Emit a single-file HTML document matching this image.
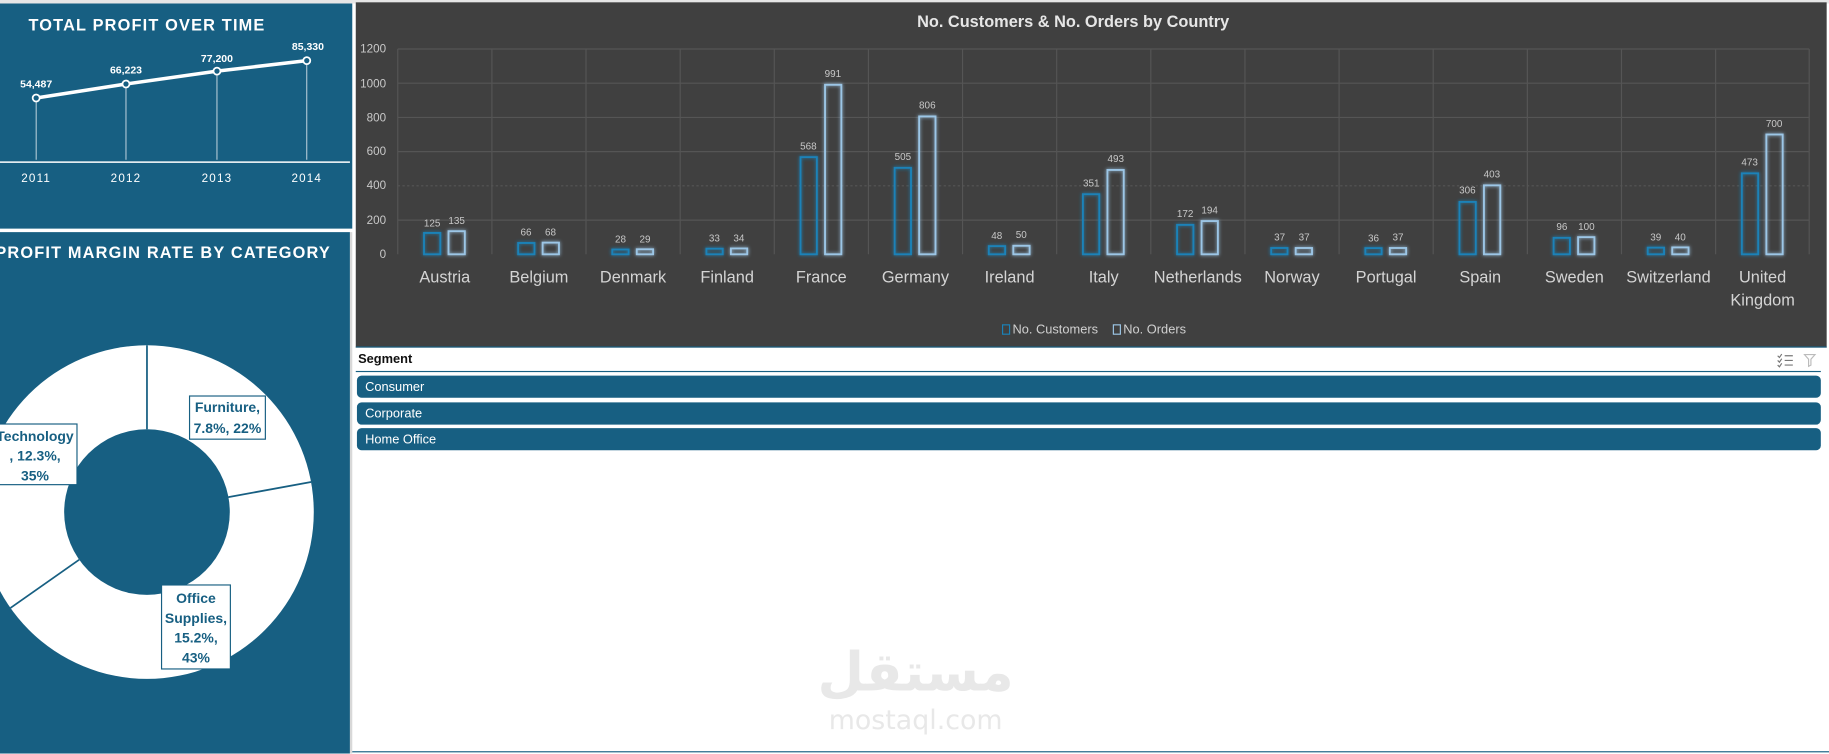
<!DOCTYPE html>
<html><head><meta charset="utf-8"><style>
html,body{margin:0;padding:0;width:1829px;height:754px;overflow:hidden;background:#fff}
#w{position:absolute;left:0;top:0;width:1568px;height:646px;transform:scale(1.16645);transform-origin:0 0;font-family:"Liberation Sans",sans-serif}
.p{position:absolute;background:#175f82;overflow:hidden}
.item{position:absolute;left:306px;width:1255px;height:19px;background:#175f82;border-radius:4px;color:#fff;font-size:11px;line-height:20px;padding-left:7px;box-sizing:border-box}
</style></head><body><div id="w">
<div style="position:absolute;left:0;top:0;width:1568px;height:3px;background:#e6e6e6"></div>
<div class="p" style="left:0;top:3px;width:302px;height:193px">
<svg width="302" height="193" style="position:absolute;left:0;top:0">
<text x="126" y="23" fill="#fff" font-size="14" font-weight="bold" text-anchor="middle" letter-spacing="1">TOTAL PROFIT OVER TIME</text>
<g stroke="#cfdde6" stroke-width="0.8"><line x1="31" y1="81" x2="31" y2="134"/><line x1="108" y1="69" x2="108" y2="134"/><line x1="186" y1="58" x2="186" y2="134"/><line x1="263" y1="49" x2="263" y2="134"/></g>
<polyline points="31,81 108,69 186,58 263,49" fill="none" stroke="#fff" stroke-width="3"/>
<g fill="#175f82" stroke="#fff" stroke-width="1.5"><circle cx="31" cy="81" r="3"/><circle cx="108" cy="69" r="3"/><circle cx="186" cy="58" r="3"/><circle cx="263" cy="49" r="3"/></g>
<g fill="#fff" font-size="9" font-weight="bold" text-anchor="middle"><text x="31" y="72">54,487</text><text x="108" y="60">66,223</text><text x="186" y="50">77,200</text><text x="264" y="40">85,330</text></g>
<line x1="0" y1="136" x2="300" y2="136" stroke="#fff" stroke-width="1.2"/>
<g fill="#fff" font-size="10" text-anchor="middle" letter-spacing="1"><text x="31" y="153">2011</text><text x="108" y="153">2012</text><text x="186" y="153">2013</text><text x="263" y="153">2014</text></g>
</svg></div>
<div class="p" style="left:0;top:199px;width:300px;height:447px">
<svg width="300" height="447" style="position:absolute;left:0;top:0">
<text x="-4" y="22" fill="#fff" font-size="14" font-weight="bold" letter-spacing="1">PROFIT MARGIN RATE BY CATEGORY</text>
<g transform="translate(0,-199)">
<circle cx="126" cy="439" r="143" fill="#fff"/><circle cx="126" cy="439" r="71" fill="#175f82"/>
<g stroke="#175f82" stroke-width="1.5"><line x1="126" y1="368" x2="126" y2="296"/><line x1="195.8" y1="426.2" x2="266.7" y2="413.2"/><line x1="67.9" y1="479.8" x2="9" y2="521.2"/></g>
<g fill="#fff" stroke="#175f82" stroke-width="1"><rect x="162.5" y="339.5" width="65" height="37"/><rect x="-5" y="363.5" width="71" height="52"/><rect x="138.5" y="501.5" width="59" height="72"/></g>
<g fill="#175f82" font-size="12" font-weight="bold" text-anchor="middle">
<text x="195" y="353">Furniture,</text><text x="195" y="371">7.8%, 22%</text>
<text x="30" y="378">Technology</text><text x="30" y="395">, 12.3%,</text><text x="30" y="412">35%</text>
<text x="168" y="517">Office</text><text x="168" y="534">Supplies,</text><text x="168" y="551">15.2%,</text><text x="168" y="568">43%</text></g>
</g></svg></div>
<div style="position:absolute;left:300px;top:199px;width:2px;height:447px;background:#d8d8d8"></div>
<div style="position:absolute;left:305px;top:2px;width:1261px;height:295px;background:#404040;border-bottom:1px solid #175f82">
<svg width="1261" height="295" style="position:absolute;left:0;top:0"><defs><filter id="gl" x="-50%" y="-20%" width="200%" height="140%"><feGaussianBlur stdDeviation="1.5" result="b"/><feMerge><feMergeNode in="b"/><feMergeNode in="SourceGraphic"/></feMerge></filter></defs><g transform="translate(-305,-2)">
<text x="920" y="23" fill="#e6e6e6" font-size="14" font-weight="bold" text-anchor="middle">No. Customers &amp; No. Orders by Country</text>
<g stroke="#555" stroke-width="1"><line x1="341" y1="42" x2="1551" y2="42"/><line x1="341" y1="71.3" x2="1551" y2="71.3"/><line x1="341" y1="100.7" x2="1551" y2="100.7"/><line x1="341" y1="130" x2="1551" y2="130"/><line x1="341" y1="159.3" x2="1551" y2="159.3" stroke-dasharray="2,2"/><line x1="341" y1="188.7" x2="1551" y2="188.7"/>
<line x1="341" y1="42" x2="341" y2="218"/><line x1="421.7" y1="42" x2="421.7" y2="218"/><line x1="502.4" y1="42" x2="502.4" y2="218"/><line x1="583.1" y1="42" x2="583.1" y2="218"/><line x1="663.8" y1="42" x2="663.8" y2="218"/><line x1="744.5" y1="42" x2="744.5" y2="218"/><line x1="825.2" y1="42" x2="825.2" y2="218"/><line x1="905.9" y1="42" x2="905.9" y2="218"/><line x1="986.6" y1="42" x2="986.6" y2="218"/><line x1="1067.3" y1="42" x2="1067.3" y2="218"/><line x1="1148" y1="42" x2="1148" y2="218"/><line x1="1228.7" y1="42" x2="1228.7" y2="218"/><line x1="1309.4" y1="42" x2="1309.4" y2="218"/><line x1="1390.1" y1="42" x2="1390.1" y2="218"/><line x1="1470.8" y1="42" x2="1470.8" y2="218"/><line x1="1551" y1="42" x2="1551" y2="218"/></g>
<g fill="#c8c8c8" font-size="10" text-anchor="end"><text x="331" y="45">1200</text><text x="331" y="75">1000</text><text x="331" y="104">800</text><text x="331" y="133">600</text><text x="331" y="162">400</text><text x="331" y="192">200</text><text x="331" y="221">0</text></g>
<g fill="none" stroke-width="1.6" filter="url(#gl)">
<g stroke="#1a82b8">
<rect x="363.5" y="199.7" width="14" height="18.3"/><rect x="444.2" y="208.3" width="14" height="9.7"/><rect x="524.9" y="213.9" width="14" height="4.1"/><rect x="605.6" y="213.2" width="14" height="4.8"/><rect x="686.3" y="134.7" width="14" height="83.3"/><rect x="767" y="143.9" width="14" height="74.1"/><rect x="847.7" y="211" width="14" height="7"/><rect x="928.4" y="166.5" width="14" height="51.5"/><rect x="1009.1" y="192.8" width="14" height="25.2"/><rect x="1089.8" y="212.6" width="14" height="5.4"/><rect x="1170.5" y="212.7" width="14" height="5.3"/><rect x="1251.2" y="173.1" width="14" height="44.9"/><rect x="1331.9" y="203.9" width="14" height="14.1"/><rect x="1412.6" y="212.3" width="14" height="5.7"/><rect x="1493.3" y="148.6" width="14" height="69.4"/></g>
<g stroke="#9cc6e6">
<rect x="384.5" y="198.2" width="14" height="19.8"/><rect x="465.2" y="208" width="14" height="10"/><rect x="545.9" y="213.7" width="14" height="4.3"/><rect x="626.6" y="213" width="14" height="5"/><rect x="707.3" y="72.7" width="14" height="145.3"/><rect x="788" y="99.8" width="14" height="118.2"/><rect x="868.7" y="210.7" width="14" height="7.3"/><rect x="949.4" y="145.7" width="14" height="72.3"/><rect x="1030.1" y="189.5" width="14" height="28.5"/><rect x="1110.8" y="212.6" width="14" height="5.4"/><rect x="1191.5" y="212.6" width="14" height="5.4"/><rect x="1272.2" y="158.9" width="14" height="59.1"/><rect x="1352.9" y="203.3" width="14" height="14.7"/><rect x="1433.6" y="212.1" width="14" height="5.9"/><rect x="1514.3" y="115.3" width="14" height="102.7"/></g></g>
<g fill="#c8c8c8" font-size="8.5" text-anchor="middle">
<text x="370.5" y="194">125</text><text x="391.5" y="192">135</text><text x="451" y="202">66</text><text x="472" y="202">68</text><text x="532" y="208">28</text><text x="553" y="208">29</text><text x="612.5" y="207">33</text><text x="633.5" y="207">34</text><text x="693" y="128">568</text><text x="714" y="66">991</text><text x="774" y="137">505</text><text x="795" y="93">806</text><text x="854.5" y="205">48</text><text x="875.5" y="204">50</text><text x="935.5" y="160">351</text><text x="956.5" y="139">493</text><text x="1016" y="186">172</text><text x="1037" y="183">194</text><text x="1097" y="206">37</text><text x="1118" y="206">37</text><text x="1177.5" y="207">36</text><text x="1198.5" y="206">37</text><text x="1258" y="166">306</text><text x="1279" y="152">403</text><text x="1339" y="197">96</text><text x="1360" y="197">100</text><text x="1419.5" y="206">39</text><text x="1440.5" y="206">40</text><text x="1500" y="142">473</text><text x="1521" y="109">700</text></g>
<g fill="#d4d4d4" font-size="14" text-anchor="middle"><text x="381.3" y="242">Austria</text><text x="462" y="242">Belgium</text><text x="542.7" y="242">Denmark</text><text x="623.4" y="242">Finland</text><text x="704.1" y="242">France</text><text x="784.8" y="242">Germany</text><text x="865.5" y="242">Ireland</text><text x="946.2" y="242">Italy</text><text x="1026.9" y="242">Netherlands</text><text x="1107.6" y="242">Norway</text><text x="1188.3" y="242">Portugal</text><text x="1269" y="242">Spain</text><text x="1349.7" y="242">Sweden</text><text x="1430.4" y="242">Switzerland</text><text x="1511.1" y="242">United</text><text x="1511.1" y="262">Kingdom</text></g>
<rect x="859.5" y="278.5" width="6" height="8" fill="none" stroke="#1a82b8"/><text x="868" y="286" fill="#d0d0d0" font-size="11">No. Customers</text>
<rect x="954.5" y="278.5" width="6" height="8" fill="none" stroke="#9cc6e6"/><text x="963" y="286" fill="#d0d0d0" font-size="11">No. Orders</text>
</g></svg></div>
<div style="position:absolute;left:307px;top:302px;font-size:11px;font-weight:bold;color:#111">Segment</div>
<svg width="40" height="14" style="position:absolute;left:1522px;top:302px"><g stroke="#777" stroke-width="1"><line x1="8" y1="3" x2="15" y2="3"/><line x1="8" y1="7" x2="15" y2="7"/><line x1="8" y1="11" x2="15" y2="11"/><path d="M2 3l1.5 1.5 2-3M2 7l1.5 1.5 2-3M2 11l1.5 1.5 2-3" fill="none"/></g><path d="M25 2h9l-3.5 4v5l-2 1v-6z" fill="none" stroke="#bbb"/></svg>
<div style="position:absolute;left:305px;top:318px;width:1256px;height:1px;background:#175f82"></div>
<div class="item" style="top:322px">Consumer</div>
<div class="item" style="top:345px">Corporate</div>
<div class="item" style="top:367px">Home Office</div>
<div style="position:absolute;left:700px;top:548px;width:170px;text-align:center;color:#e8e8e8;font-family:'DejaVu Sans',sans-serif;font-size:46px;font-weight:bold;line-height:56px">مستقل</div>
<div style="position:absolute;left:690px;top:605px;width:190px;text-align:center;color:#e8e8e8;font-family:'DejaVu Sans',sans-serif;font-size:23px">mostaql.com</div>
<div style="position:absolute;left:302px;top:644px;width:1266px;height:1px;background:#175f82"></div>
</div></body></html>
